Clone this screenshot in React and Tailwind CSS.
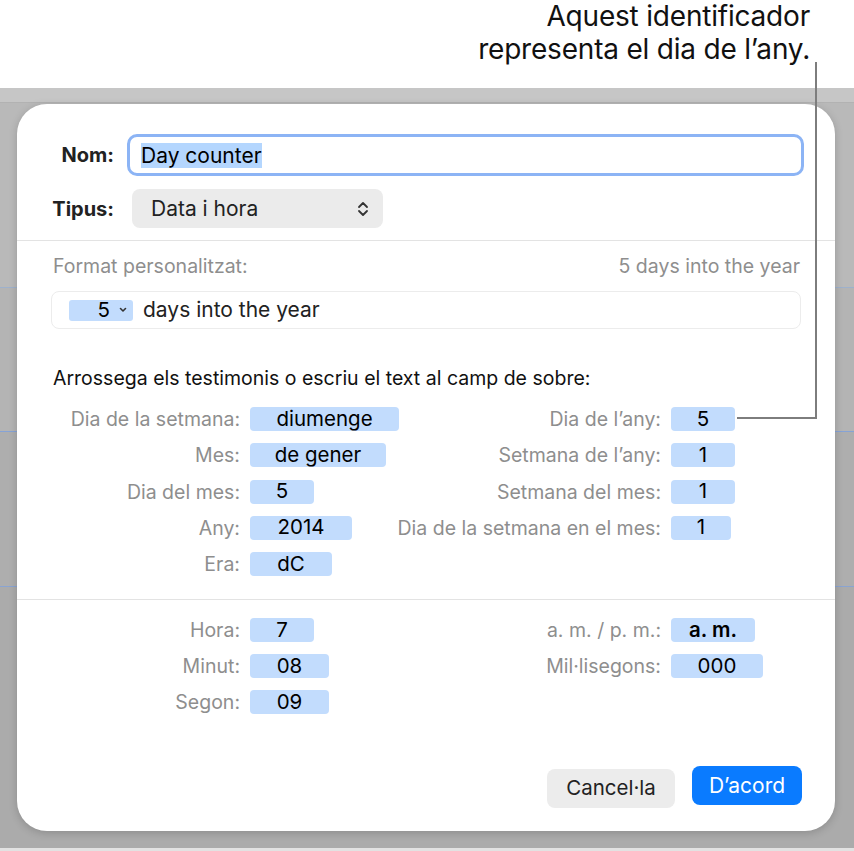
import React from "react";

const font = { fontFamily: "Inter, 'Noto Sans', sans-serif" };

// Testimoni (token) blau
const Token = ({ children, w, bold }) => (
  <div
    className={`h-[24px] rounded-[4px] bg-[#c2dcfd] flex items-center justify-center text-[20.5px] text-black justify-self-start whitespace-nowrap ${bold ? "font-semibold text-[#222]" : ""}`}
    style={{ width: w }}
  >
    {children}
  </div>
);

const Label = ({ children }) => (
  <div className="flex justify-end text-[19.5px] text-[#8e8e8e] leading-[24px] whitespace-nowrap">
    <span>{children}</span>
  </div>
);

export default function App() {
  return (
    <div className="relative w-[854px] h-[851px] bg-white overflow-hidden text-[#1d1d1f]" style={font}>
      {/* Text de la crida */}
      <div className="h-[88px] pr-[44px] text-right text-[28px] leading-[33px] text-[#111] tracking-[-0.2px]">
        <div>Aquest identificador</div>
        <div>representa el dia de l’any.</div>
      </div>

      {/* Fons de l'aplicació */}
      <div className="flex flex-col h-[760px]">
        <div className="h-[15px] bg-[#c6c6c6] border-b border-[#b2b2b2]"></div>
        <div className="h-[185px] bg-[#b9b9b9] border-b border-[#9eb1cc]"></div>
        <div className="h-[144px] bg-[#b4b4b4] border-b border-[#86a3d6]"></div>
        <div className="h-[155px] bg-[#aeaeae] border-b border-[#8aa4d2]"></div>
        <div className="flex-1 bg-[#ababab]"></div>
      </div>
      <div className="h-[3px] bg-[#e2e2e2]"></div>

      {/* Diàleg */}
      <div className="absolute left-[17px] top-[104px] w-[818px] h-[727px] bg-white rounded-[30px] shadow-[0_2px_8px_rgba(0,0,0,0.18)] flex flex-col">
        {/* Nom */}
        <div className="flex items-center mt-[30px] h-[42px]">
          <div className="w-[97px] text-right text-[20px] font-bold text-[#222]">Nom:</div>
          <div className="ml-[13px] w-[677px] h-[42px] rounded-[10px] border-[3px] border-[#8cb4f5] flex items-center pl-[11px]">
            <span className="bg-[#b4d6fe] text-[21px] leading-[25px] text-black">Day counter</span>
          </div>
        </div>

        {/* Tipus */}
        <div className="flex items-center mt-[13px] h-[39px]">
          <div className="w-[97px] text-right text-[20px] font-bold text-[#222]">Tipus:</div>
          <div className="ml-[18px] w-[251px] h-[39px] rounded-[8px] bg-[#ebebeb] flex items-center justify-between pl-[19px] pr-[14px]">
            <span className="text-[21px] text-[#222]">Data i hora</span>
            <svg width="12" height="16" viewBox="0 0 12 16" fill="none" stroke="#333" strokeWidth="1.8" strokeLinecap="round" strokeLinejoin="round">
              <path d="M2 6 L6 2 L10 6" />
              <path d="M2 10 L6 14 L10 10" />
            </svg>
          </div>
        </div>

        <div className="mt-[12px] h-[1px] bg-[#e3e3e3]"></div>

        {/* Format personalitzat */}
        <div className="flex justify-between items-center pr-[35px] pl-[36px] mt-[14px] h-[24px] text-[19.5px] text-[#8e8e8e]">
          <span>Format personalitzat:</span>
          <span>5 days into the year</span>
        </div>
        <div className="mx-[34px] mt-[12px] h-[38px] rounded-[8px] border border-[#ececec] flex items-center pl-[17px]">
          <div className="w-[64px] h-[21px] rounded-[3px] bg-[#c2dcfd] flex items-center justify-end pr-[6px] gap-[9px]">
            <span className="text-[20.5px] leading-none text-black">5</span>
            <svg width="8" height="6" viewBox="0 0 8 6" fill="none" stroke="#333" strokeWidth="1.6" strokeLinecap="round" strokeLinejoin="round">
              <path d="M1.5 1.5 L4 4 L6.5 1.5" />
            </svg>
          </div>
          <span className="ml-[10px] text-[21px] text-[#222]">days into the year</span>
        </div>

        <div className="pl-[36px] mt-[37px] text-[19.5px] text-[#111] leading-[24px]">
          Arrossega els testimonis o escriu el text al camp de sobre:
        </div>

        {/* Testimonis de data */}
        <div className="mt-[17px] grid grid-cols-[223px_180px_221px_1fr] gap-x-[10px] gap-y-[12.25px] items-center">
          <Label>Dia de la setmana:</Label>
          <Token w="149px">diumenge</Token>
          <Label>Dia de l’any:</Label>
          <Token w="64px">5</Token>

          <Label>Mes:</Label>
          <Token w="136px">de gener</Token>
          <Label>Setmana de l’any:</Label>
          <Token w="64px">1</Token>

          <Label>Dia del mes:</Label>
          <Token w="64px">5</Token>
          <Label>Setmana del mes:</Label>
          <Token w="64px">1</Token>

          <Label>Any:</Label>
          <Token w="102px">2014</Token>
          <Label>Dia de la setmana en el mes:</Label>
          <Token w="60px">1</Token>

          <Label>Era:</Label>
          <Token w="82px">dC</Token>
          <div></div>
          <div></div>
        </div>

        <div className="mt-[23px] h-[1px] bg-[#e3e3e3]"></div>

        {/* Testimonis d'hora */}
        <div className="mt-[18px] grid grid-cols-[223px_180px_221px_1fr] gap-x-[10px] gap-y-[12px] items-center">
          <Label>Hora:</Label>
          <Token w="64px">7</Token>
          <Label>a. m. / p. m.:</Label>
          <Token w="84px" bold>a. m.</Token>

          <Label>Minut:</Label>
          <Token w="79px">08</Token>
          <Label>Mil·lisegons:</Label>
          <Token w="92px">000</Token>

          <Label>Segon:</Label>
          <Token w="79px">09</Token>
          <div></div>
          <div></div>
        </div>

        {/* Botons */}
        <div className="mt-auto mb-[23px] flex justify-end items-start pr-[33px] gap-[17px]">
          <button className="mt-[3px] w-[128px] h-[39px] rounded-[8px] bg-[#ececec] text-[20.5px] text-[#222]">Cancel·la</button>
          <button className="w-[110px] h-[39px] rounded-[8px] bg-[#0a7bff] text-[21px] text-white">D’acord</button>
        </div>
      </div>

      {/* Línia de la crida */}
      <svg className="absolute left-0 top-0 pointer-events-none" width="854" height="851">
        <path d="M816 62 L816 418 L737 418" fill="none" stroke="#7d7d7d" strokeWidth="2" />
      </svg>
    </div>
  );
}
